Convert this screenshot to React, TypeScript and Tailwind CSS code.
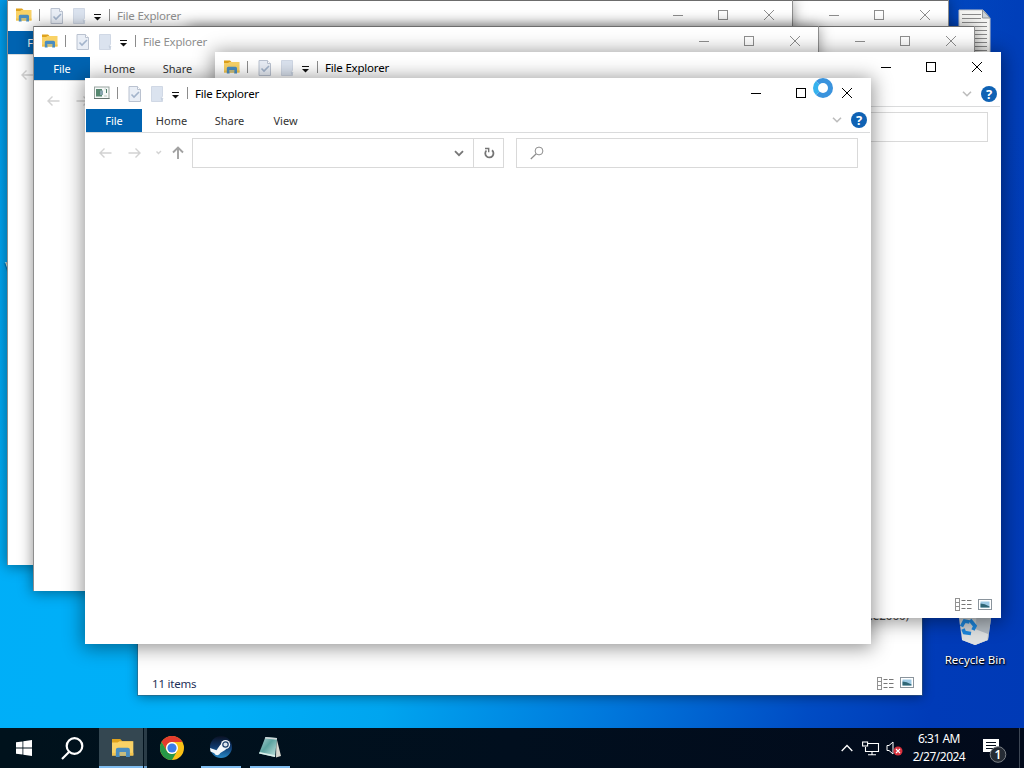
import React from 'react'
import clsx from 'clsx'

type WindowProps = {
  place: string
  active?: boolean
  loadingIcon?: boolean
  statusBar?: boolean
  title?: boolean
  tabs?: string[]
}

const TAB_WIDTHS: Record<string, string> = {
  File: 'w-14 bg-[#0063b1] text-white',
  Home: 'w-[58px] pl-px',
  Share: 'w-[58px] pl-px',
  View: 'w-[54px] pl-px',
}

const ALL_TABS = Object.keys(TAB_WIDTHS)

function FolderIcon({ className }: { className: string }) {
  return (
    <svg viewBox="0 0 16 14" className={className}>
      <path d="M0 .5h6l1.500 1.500H15V5H0z" fill="#dfa21c" />
      <path d="M0 3h4l1.500-1H15.500V12.500H0z" fill="#f9d266" />
      <path d="M0 10.500h15.500v2H0z" fill="#f3c44e" />
      <path d="M2.800 13.500V8.300q0-1.500 1.500-1.500h7.200q1.500 0 1.500 1.500v5.200h-2.800v-3.500H5.600v3.500z" fill="#4a8dc0" />
      <path d="M5.600 10h4.600v2.500H5.600z" fill="#c6bd80" />
    </svg>
  )
}

function AppWindowIcon() {
  return (
    <svg viewBox="0 0 16 14" className="w-4 h-[14px]">
      <rect x="0.500" y="1" width="14.500" height="11.500" fill="#f6f9f8" stroke="#98a39f" />
      <path d="M0 12.500h15.500" stroke="#66736f" />
      <rect x="2" y="3" width="6" height="7.500" fill="#55876f" />
      <rect x="6" y="4.500" width="3" height="4.500" fill="#87a4ae" />
      <path d="M10.500 3h1.500M10 10h3" stroke="#c0cac6" />
      <path d="M12.500 3v4" stroke="#4d7d69" />
    </svg>
  )
}

function QuickAccess({ loadingIcon }: { loadingIcon?: boolean }) {
  return (
    <div className="flex items-center h-full pb-px">
      <div className="w-[23px] shrink-0">
        {loadingIcon ? <AppWindowIcon /> : <FolderIcon className="w-4 h-[14px]" />}
      </div>
      <div className="w-px h-3 bg-[#8c8c8c] mr-[10px]" />
      <svg viewBox="0 0 14 16" className="w-[14px] h-4 mr-[9px] mt-px">
        <path d="M1 .5h8.500l3 3v12H1z" fill="#e9eef6" stroke="#bac2d0" />
        <path d="M9.500.5v3h3" fill="#fff" stroke="#bac2d0" />
        <path d="M3.500 8.500l2.500 2.500 5-5" fill="none" stroke="#a3b4cb" strokeWidth="1.600" />
      </svg>
      <svg viewBox="0 0 13 16" className="w-[13px] h-4 mr-[7px] mt-px">
        <path d="M.5.5h11v9.500l-1 2 1 1.500v2H.5z" fill="#dbe3ef" stroke="#d0d8e5" />
        <path d="M9.500 11.500l3 1-2 2.500z" fill="#c6d0df" />
      </svg>
      <svg viewBox="0 0 9 7" className="w-[9px] h-[7px] mt-[4px] mr-[7px]">
        <path d="M1 .5h7" stroke="#111" />
        <path d="M1 3h7L4.500 6.500z" fill="#111" />
      </svg>
      <div className="w-px h-3 bg-[#8c8c8c] mr-[7px]" />
    </div>
  )
}

function WindowButtons() {
  return (
    <div className="flex h-full items-start">
      <svg viewBox="0 0 46 30" className="w-[46px] h-[30px]" fill="none" stroke="currentColor">
        <path d="M18 15.500h10" />
      </svg>
      <svg viewBox="0 0 45 30" className="w-[45px] h-[30px]" fill="none" stroke="currentColor">
        <rect x="17.500" y="10.500" width="9" height="9" />
      </svg>
      <svg viewBox="0 0 46 30" className="w-[46px] h-[30px]" fill="none" stroke="currentColor">
        <path d="M18 10l10 10M28 10L18 20" />
      </svg>
    </div>
  )
}

function ViewModeIcons() {
  return (
    <div className="flex items-center gap-[6px]">
      <svg viewBox="0 0 17 13" className="w-[17px] h-[13px]" fill="none" stroke="#777">
        <rect x="0.500" y="0.500" width="4" height="12" stroke="#929292" />
        <path d="M.5 4.500h4M.5 8.500h4" stroke="#929292" />
        <path d="M6.500 2.500h4M12 2.500h4.500M6.500 6.500h4M12 6.500h4.500M6.500 10.500h4M12 10.500h4.500" />
      </svg>
      <svg viewBox="0 0 15 12" className="w-[15px] h-3">
        <rect x="0.500" y="0.500" width="13" height="10" fill="#fff" stroke="#8a949c" />
        <rect x="2.500" y="2.500" width="9" height="6" fill="#9cc9e4" />
        <path d="M2.500 4.500q4 0 9 3v1h-9z" fill="#2f6675" />
      </svg>
    </div>
  )
}

function HelpBadge() {
  return (
    <div className="flex items-center justify-center size-4 rounded-full bg-[#0f62b4] text-white text-[13px] leading-4 font-bold">
      ?
    </div>
  )
}

function ExplorerWindow({ place, active, loadingIcon, statusBar, title = true, tabs = ALL_TABS }: WindowProps) {
  return (
    <div
      className={clsx(
        'absolute bg-white flex flex-col border-l',
        place,
        active
          ? 'w-[786px] h-[566px] pr-px border-white shadow-[0_2px_18px_2px_rgba(0,0,0,0.42)]'
          : 'w-[785px] h-[565px] border-[#8e8e8e] shadow-[inset_0_1px_0_#6d6d6d,1px_0_0_#8e8e8e,0_1px_13px_1px_rgba(0,0,0,0.4)]',
      )}
    >
      <div
        className={clsx(
          'flex h-[31px] shrink-0 items-center justify-between pl-2',
          active ? 'text-black' : 'text-[#8f8f8f]',
        )}
      >
        <div className="flex h-full items-center">
          {title && (
            <>
              <QuickAccess loadingIcon={loadingIcon} />
              <span className="text-[11.500px] tracking-[-0.2px] leading-4">File Explorer</span>
            </>
          )}
        </div>
        <WindowButtons />
      </div>

      <div className="flex h-[24px] shrink-0 border-b border-[#dadbdc] text-[11px] text-[#333]">
        {tabs.map((t) => (
          <div key={t} className={clsx('flex items-center justify-center pt-px', TAB_WIDTHS[t])}>{t}</div>
        ))}
        <div className="ml-auto flex items-center gap-[9px] pr-[3px] pb-px">
          <svg viewBox="0 0 10 6" className="w-[10px] h-[6px]" fill="none" stroke="#bcbcbc" strokeWidth="1.600">
            <path d="M1 .7l4 4 4-4" />
          </svg>
          <HelpBadge />
        </div>
      </div>

      <div className="flex h-10 shrink-0 items-center pl-[13px] pr-3">
        <svg viewBox="0 0 93 14" className="w-[93px] h-[14px]" fill="none" stroke="#d2d2d2" strokeWidth="1.400">
          <path d="M12.500 7H1M5.500 2.500L1 7l4.500 4.500" />
          <path d="M29.500 7h11.500M36.500 2.500L41 7l-4.500 4.500" />
          <path d="M57.500 5.500l2 2 2.500-2.500" />
          <path d="M79 13V1.500M74 6.500l5-5 5 5" stroke="#a2a2a2" strokeWidth="1.900" />
        </svg>
        <div className="flex h-[30px] w-[312px] border border-[#d9d9d9]">
          <div className="flex flex-1 items-center justify-end pr-[9px] pt-px">
            <svg viewBox="0 0 10 7" className="w-[10px] h-[7px]" fill="none" stroke="#777" strokeWidth="1.800">
              <path d="M1 1.200l4 4 4-4" />
            </svg>
          </div>
          <div className="flex w-[30px] items-center justify-center border-l border-[#d9d9d9]">
            <svg viewBox="0 0 12 12" className="size-3" fill="none" stroke="#757575" strokeWidth="1.800">
              <path d="M9 3.200a4.100 4.100 0 1 1-5.600.3" />
              <path d="M2 1.500h3.700v3.700" strokeWidth="1.400" />
            </svg>
          </div>
        </div>
        <div className="ml-3 flex h-[30px] flex-1 items-center border border-[#d9d9d9] pl-[13px]">
          <svg viewBox="0 0 14 14" className="size-[14px]" fill="none" stroke="#8d8d8d">
            <circle cx="9" cy="5" r="3.900" />
            <path d="M6 8l-5.200 5" strokeWidth="1.200" />
          </svg>
        </div>
      </div>

      <div className="flex-1" />
      {statusBar && (
        <div className="flex h-[27px] shrink-0 items-center justify-end pr-[7px]">
          <ViewModeIcons />
        </div>
      )}
    </div>
  )
}

function ItemsWindow() {
  return (
    <div className="absolute left-[138px] top-[129px] flex h-[566px] w-[784px] flex-col justify-end bg-white shadow-[0_0_0_1px_rgba(60,90,110,0.5),0_2px_11px_rgba(0,0,0,0.4)]">
      <div className="flex justify-end pr-[13px] text-[11.500px] leading-4 text-[#4a4a4a]">c.e2060)</div>
      <div className="h-[47px]" />
      <div className="flex h-[24px] items-center justify-between pl-[14px] pr-[7px]">
        <span className="pt-px text-[11.500px] tracking-[-0.2px] text-[#1e3058]">11 items</span>
        <ViewModeIcons />
      </div>
    </div>
  )
}

function DesktopIcons() {
  return (
    <>
      <svg viewBox="0 0 34 48" className="absolute left-[958px] top-[9px] w-[34px] h-12">
        <path d="M1 1h24l7 8v39H1z" fill="#f5f5f3" stroke="#c8c8c8" />
        <path d="M24.500 1v8H32z" fill="#ccd2d6" stroke="#8d9499" />
        <path
          d="M4 5.500h19M4 9.500h19M4 13.500h25M4 17.500h25M4 21.500h25M4 25.500h25M4 29.500h25M4 33.500h25M4 37.500h25M4 41.500h25"
          stroke="#8b8b8b"
        />
      </svg>
      <div className="absolute left-[938px] top-[596px] flex w-[74px] flex-col items-center">
        <svg viewBox="0 0 36 50" className="w-9 h-[50px]">
          <path d="M0 8h36l-5 36-13 5-13-5z" fill="#ccd2d6" />
          <path d="M20 8h16l-5 36-13 5z" fill="#b3bbc2" />
          <path d="M5 38l13-5 13 5-.5 6L18 49 5 44z" fill="#dfe1e1" />
          <g fill="none" stroke="#1b86dd" strokeWidth="3.600">
            <path d="M4.500 30.500l3-5.500 5 1" />
            <path d="M13 24l5 6-2 4" />
            <path d="M14 37.500l-6.500-1-1.500-3.500" />
          </g>
        </svg>
        <span className="mt-[6px] whitespace-nowrap text-[11.500px] leading-4 text-white [text-shadow:1px_1px_2px_#000,0_1px_1px_#000]">
          Recycle Bin
        </span>
      </div>
      <span className="absolute left-[5px] top-[259px] text-[12px] leading-4 text-white [text-shadow:1px_1px_2px_#000,0_1px_1px_#000]">
        V
      </span>
    </>
  )
}

function ChromeIcon() {
  return (
    <svg viewBox="0 0 24 24" className="size-6">
      <circle cx="12" cy="12" r="12" fill="#fbc116" />
      <path d="M1.600 6A12 12 0 0 1 22.400 6H12a6 6 0 0 0-5.200 9z" fill="#e33b2e" />
      <path d="M1.600 6A12 12 0 0 0 12 24l5.200-9a6 6 0 0 1-10.400 0z" fill="#279847" />
      <circle cx="12" cy="12" r="6" fill="#fff" />
      <circle cx="12" cy="12" r="4.600" fill="#3b7de8" />
    </svg>
  )
}

function SteamIcon() {
  return (
    <svg viewBox="0 0 24 24" className="size-6">
      <defs>
        <linearGradient id="steam" x1="0" y1="0" x2="0" y2="1">
          <stop offset="0" stopColor="#0a1224" />
          <stop offset="0.500" stopColor="#10386c" />
          <stop offset="1" stopColor="#2789c8" />
        </linearGradient>
      </defs>
      <circle cx="12" cy="12" r="11" fill="url(#steam)" />
      <path d="M1 13l6.500 2.200 4-5.700 5.500 5-5.700 3.500a3.200 3.200 0 0 1-6 .2L1.500 16.500z" fill="#f4f7fa" />
      <circle cx="16.500" cy="9.500" r="4.600" fill="#f4f7fa" />
      <circle cx="16.500" cy="9.500" r="2.700" fill="#dde5ee" stroke="#183c68" strokeWidth="1.200" />
    </svg>
  )
}

function NotepadIcon() {
  return (
    <svg viewBox="0 0 24 24" className="size-6">
      <defs>
        <linearGradient id="note" x1="0" y1="0" x2="1" y2="1">
          <stop offset="0" stopColor="#b9d6da" />
          <stop offset="0.450" stopColor="#5ca3a0" />
          <stop offset="1" stopColor="#c8e8e3" />
        </linearGradient>
      </defs>
      <path d="M18.500 3l4.500 18-5 1.500z" fill="#d8d8d0" />
      <path d="M7.500 2l11.500 1-2 19L1 18.500z" fill="url(#note)" />
      <path d="M7.500 2l11.500 1-.2 1.800L6.800 3.600z" fill="#cfd6d8" />
      <path d="M1 18.500l16 3.500.2-1.800-15.600-3.300z" fill="#dcefeb" />
    </svg>
  )
}

function Taskbar() {
  return (
    <div className="absolute inset-x-0 bottom-0 flex h-10 items-center bg-linear-to-r from-[#00121c] via-[#010f1e] to-[#020a1b] text-white">
      <div className="flex w-12 justify-center">
        <svg viewBox="0 0 16 16" className="size-4" fill="#fff">
          <path d="M0 2.300l6.500-.9v6.200H0zM7.300 1.300L16 0v7.600H7.300zM0 8.400h6.500v6.200L0 13.700zM7.300 8.400H16V16l-8.700-1.300z" />
        </svg>
      </div>
      <div className="flex w-[51px] justify-center pr-[3px]">
        <svg viewBox="0 0 23 23" className="size-[23px]" fill="none" stroke="#fff" strokeWidth="2.200">
          <circle cx="13.500" cy="9" r="7.800" />
          <path d="M8 15l-7 7" />
        </svg>
      </div>
      <div className="flex h-full w-12">
        <div className="flex w-[44px] flex-col items-center border-b-2 border-[#80bdf0] bg-[#344751] pt-[10px] pl-1">
          <FolderIcon className="w-[22px] h-[20px]" />
        </div>
        <div className="ml-px w-[3px] border-b-2 border-[#6a9fcb] bg-[#2a3c47]" />
      </div>
      <div className="flex w-[50px] justify-center">
        <ChromeIcon />
      </div>
      <div className="ml-1 flex h-full w-10 items-center justify-center border-b-2 border-[#80bdf0]">
        <SteamIcon />
      </div>
      <div className="ml-[9px] flex h-full w-10 items-center justify-center border-b-2 border-[#80bdf0]">
        <NotepadIcon />
      </div>

      <div className="ml-auto flex h-full items-center">
        <svg viewBox="0 0 12 8" className="w-3 h-2" fill="none" stroke="#fff" strokeWidth="1.300">
          <path d="M.7 7L6 1.500 11.300 7" />
        </svg>
        <svg viewBox="0 0 18 15" className="ml-[9px] w-[18px] h-[15px]" fill="none" stroke="#fff" strokeWidth="1.100">
          <path d="M6 2.500h10.500v8H3.500V6" />
          <rect x="0.600" y="1" width="5" height="4" />
          <path d="M10 10.500v3M6 13.800h8" />
        </svg>
        <svg viewBox="0 0 18 16" className="ml-[6px] w-[18px] h-4">
          <path d="M1 5.500h2L7 2v12l-4-3.500H1z" fill="none" stroke="#fff" />
          <circle cx="12" cy="11" r="4.500" fill="#d9313d" />
          <path d="M10 9l4 4M14 9l-4 4" stroke="#fff" strokeWidth="1.100" />
        </svg>
        <div className="ml-[7px] w-[56px] text-center text-[12px] leading-[18px] tracking-[-0.5px] whitespace-nowrap">
          <div>6:31 AM</div>
          <div>2/27/2024</div>
        </div>
        <svg viewBox="0 0 26 26" className="ml-[15px] mr-[11px] mt-1 w-[26px] h-[26px]">
          <path d="M1 2h16v13h-5v3.500L8.500 15H1z" fill="#fff" />
          <path d="M4 5.500h10M4 8.500h10M4 11.500h10" stroke="#06101e" />
          <circle cx="16" cy="17.500" r="7.800" fill="#252b34" stroke="#7b8086" />
          <text x="16" y="21.500" textAnchor="middle" fontSize="12" fill="#fff" fontWeight="600">1</text>
        </svg>
        <div className="mr-1 h-full w-px bg-[#3d4654]" />
      </div>
    </div>
  )
}

export default function App() {
  return (
    <div className="relative h-[768px] w-[1024px] overflow-hidden bg-[linear-gradient(180deg,rgba(0,80,190,0.18),rgba(0,80,190,0)_65%),linear-gradient(97deg,#00aef8_0%,#00b0f8_26%,#00a5ef_42%,#0078dc_62%,#004cc4_80%,#003bb8_91%,#003ab6_100%)] font-['Noto_Sans','Open_Sans',sans-serif] select-none">
      <DesktopIcons />
      <ItemsWindow />
      <ExplorerWindow place="left-[163px] top-0" title={false} tabs={[]} />
      <ExplorerWindow place="left-[7px] top-0" tabs={['File']} />
      <ExplorerWindow place="left-[189px] top-[26px]" title={false} tabs={[]} />
      <ExplorerWindow place="left-[33px] top-[26px]" tabs={['File', 'Home', 'Share']} />
      <ExplorerWindow place="left-[215px] top-[52px]" active statusBar tabs={[]} />
      <ExplorerWindow place="left-[85px] top-[78px]" active loadingIcon />
      {/* busy cursor */}
      <div className="absolute left-[813px] top-[78px] size-5 rounded-full border-[5px] border-[#3a93dd] border-l-[#35b2ee] bg-white" />
      <Taskbar />
    </div>
  )
}
